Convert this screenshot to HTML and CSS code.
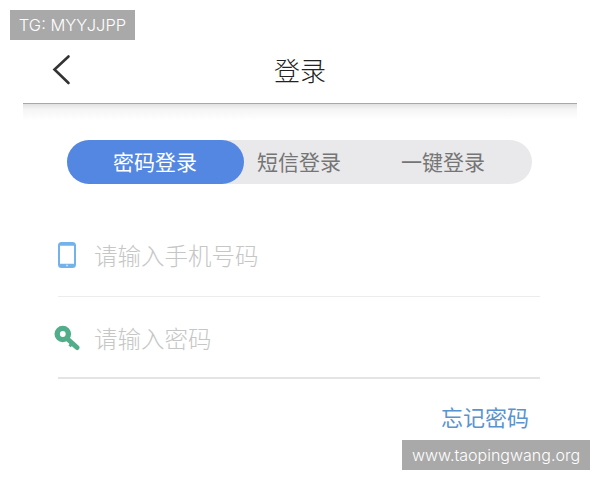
FILE: index.html
```html
<!DOCTYPE html>
<html lang="zh">
<head>
    <meta charset="UTF-8">
    <meta name="viewport" content="width=device-width, initial-scale=1.0">
    <title>登录</title>
    <link rel="stylesheet" href="styles.css">
</head>
<body>
    <div class="page">
        <div class="navbar">
            <svg class="back" width="20" height="32" viewBox="0 0 20 32">
                <path d="M17.5 2.5 L3.5 15.5 L17.5 29" fill="none" stroke="#333" stroke-width="2.6" stroke-linecap="round" stroke-linejoin="miter"/>
            </svg>
            <div class="title">登录</div>
        </div>
        <div class="nav-shadow"></div>

        <div class="tabs">
            <div class="tab active">密码登录</div>
            <div class="tab second">短信登录</div>
            <div class="tab third">一键登录</div>
        </div>

        <div class="form">
            <div class="field phone-field">
                <svg class="icon" width="18" height="26" viewBox="0 0 18 26">
                    <rect x="1" y="1" width="16" height="24" rx="2.5" fill="none" stroke="#74b2ea" stroke-width="2"/>
                    <rect x="1" y="1" width="16" height="2.8" rx="1.2" fill="#74b2ea"/>
                    <rect x="1" y="21.8" width="16" height="3.2" rx="1.2" fill="#74b2ea"/>
                    <circle cx="9" cy="23.4" r="0.9" fill="#d5e8f8"/>
                </svg>
                <span class="placeholder">请输入手机号码</span>
            </div>
            <div class="field key-field">
                <svg class="icon key" width="26" height="26" viewBox="0 0 26 26">
                    <circle cx="8.8" cy="9" r="5.6" fill="none" stroke="#52ad8a" stroke-width="5.4"/>
                    <path d="M13 13.5 L23 22.5" fill="none" stroke="#52ad8a" stroke-width="5" stroke-linecap="round"/>
                    <path d="M17.5 19 L15.6 21.4" fill="none" stroke="#52ad8a" stroke-width="3"/>
                </svg>
                <span class="placeholder">请输入密码</span>
            </div>
        </div>

        <div class="forgot-row"><span class="forgot">忘记密码</span></div>
    </div>

    <div class="mark mark-top">TG: MYYJJPP</div>
    <div class="mark mark-bottom">www.taopingwang.org</div>
</body>
</html>
```

FILE: styles.css
```css
html, body {
    margin: 0;
    padding: 0;
}
body {
    width: 600px;
    height: 480px;
    overflow: hidden;
    background-color: #fff;
    font-family: "Noto Sans CJK SC", "Liberation Sans", sans-serif;
    position: relative;
}
.page {
    width: 600px;
    padding-top: 40px;
}
.navbar {
    margin: 0 23px;
    height: 63px;
    border-bottom: 1px solid #a8a8a8;
    display: flex;
    align-items: center;
    justify-content: center;
    position: relative;
}
.back {
    position: absolute;
    left: 28px;
    top: 14px;
}
.title {
    font-size: 26px;
    font-weight: 300;
    color: #222;
    line-height: 59px;
    height: 63px;
}
.nav-shadow {
    margin: 0 23px;
    height: 16px;
    background: linear-gradient(#e2e2e2 0%, #f5f5f5 35%, #fff 100%);
}
.tabs {
    margin: 20px 0 0 67px;
    width: 465px;
    height: 44px;
    border-radius: 22px;
    background-color: #e9e9eb;
    display: flex;
    font-size: 21px;
    color: #757575;
    line-height: 43px;
}
.tab {
    text-align: center;
}
.tab.active {
    width: 177px;
    padding-right: 1px;
    box-sizing: border-box;
    border-radius: 22px;
    background-color: #5387e2;
    color: #fff;
}
.tab.second {
    width: 110px;
}
.tab.third {
    width: 178px;
}
.form {
    margin: 30px 60px 0 58px;
}
.field {
    display: flex;
    align-items: center;
}
.phone-field {
    height: 82px;
    border-bottom: 1px solid #ececec;
}
.key-field {
    height: 78px;
    padding-top: 2px;
    border-bottom: 2px solid #e4e4e4;
}
.icon {
    flex: none;
}
.phone-field .icon {
    margin-right: 18px;
}
.key {
    margin-left: -4px;
    margin-right: 14px;
}
.placeholder {
    font-size: 23.5px;
    font-weight: 300;
    color: #c6c6c6;
}
.forgot-row {
    margin: 22px 71px 0 0;
    display: flex;
    justify-content: flex-end;
}
.forgot {
    font-size: 22px;
    line-height: 30px;
    color: #5a94cf;
}
.mark {
    position: absolute;
    background-color: #a9a9a9;
    color: #fff;
    font-family: "Inter", "Liberation Sans", sans-serif;
    font-weight: 300;
    height: 30px;
    line-height: 30px;
    text-align: center;
}
.mark-top {
    left: 10px;
    top: 10px;
    width: 125px;
    font-size: 16.5px;
}
.mark-bottom {
    left: 402px;
    top: 440px;
    width: 188px;
    font-size: 16px;
}
```
